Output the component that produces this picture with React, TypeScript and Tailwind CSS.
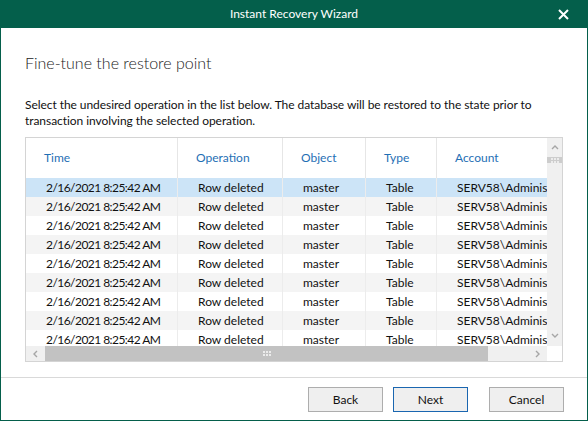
import React from "react";

const columns = [
  { label: "Time", w: "w-[152px]" },
  { label: "Operation", w: "w-[105px]" },
  { label: "Object", w: "w-[83px]" },
  { label: "Type", w: "w-[71px]" },
  { label: "Account", w: "w-[200px]" },
];

const row = ["2/16/2021 8:25:42 AM", "Row deleted", "master", "Table", "SERV58\\Administrator"];

const Chevron: React.FC<{ dir: "up" | "down" | "left" | "right" }> = ({ dir }) => {
  const pts = {
    up: "1,5 4,2 7,5",
    down: "1,2 4,5 7,2",
    left: "5,1 2,4 5,7",
    right: "2,1 5,4 2,7",
  }[dir];
  return (
    <svg width="8" height="8" viewBox="0 0 8 8" className="shrink-0">
      <polyline points={pts} fill="none" stroke="#a6a6a6" strokeWidth="1.4" />
    </svg>
  );
};

const Grip: React.FC = () => (
  <div className="grid grid-cols-3 gap-[1px]">
    {Array.from({ length: 6 }).map((_, i) => (
      <div key={i} className="w-[2px] h-[2px] bg-[#ececec]" />
    ))}
  </div>
);

export default function App() {
  return (
    <div
      className="w-[588px] h-[421px] flex flex-col bg-white border-x border-b border-[#045f4b] overflow-hidden"
      style={{ fontFamily: '"Segoe UI", "Lato", "Liberation Sans", sans-serif' }}
    >
      <div className="h-[28px] shrink-0 bg-[#045f4b] -mx-px flex items-center justify-center relative">
        <span className="text-white text-[12px]">Instant Recovery Wizard</span>
        <svg width="11" height="11" viewBox="0 0 11 11" className="absolute right-[19px] top-[9px]">
          <path d="M1 1 L10 10 M10 1 L1 10" stroke="white" strokeWidth="2" />
        </svg>
      </div>

      <div className="flex-1 flex flex-col px-[24px]">
        <h1 className="mt-[25px] text-[16px] font-light text-[#222] leading-[20px]" style={{ fontFamily: '"Lato", sans-serif' }}>
          Fine-tune the restore point
        </h1>
        <p className="mt-[24px] text-[12px] leading-[16px] tracking-[-0.06px] text-[#111]">
          Select the undesired operation in the list below. The database will be restored to the state prior to
          transaction involving the selected operation.
        </p>

        <div className="mt-[8px] h-[225px] w-[538px] border border-[#d4d4d4] flex flex-col">
          <div className="flex flex-1 min-h-0">
            <div className="flex-1 overflow-hidden">
              <div className="flex h-[40px] text-[#1f6fb5] text-[12px]">
                {columns.map((c) => (
                  <div
                    key={c.label}
                    className={`${c.w} shrink-0 flex items-center pl-[18px] border-r border-[#e6e6e6]`}
                  >
                    {c.label}
                  </div>
                ))}
              </div>
              {Array.from({ length: 9 }).map((_, r) => (
                <div
                  key={r}
                  className={`flex h-[19px] text-[12px] text-[#111] ${
                    r === 0 ? "bg-[#cce4f7]" : r % 2 === 1 ? "bg-[#f4f4f4]" : "bg-white"
                  }`}
                >
                  {columns.map((c, i) => (
                    <div
                      key={c.label}
                      className={`${c.w} shrink-0 flex items-center pl-[20px] whitespace-nowrap overflow-hidden border-r border-[#ececec] ${
                        i === 0 ? "tracking-[-0.55px]" : ""
                      }`}
                    >
                      {row[i]}
                    </div>
                  ))}
                </div>
              ))}
            </div>
            <div className="w-[15px] shrink-0 bg-[#f0f0f0] flex flex-col items-center">
              <div className="mt-[6px]">
                <Chevron dir="up" />
              </div>
              <div className="mt-[5px] w-[15px] h-[6px] bg-[#cdcdcd] flex items-center justify-center">
                <Grip />
              </div>
              <div className="mt-auto mb-[6px]">
                <Chevron dir="down" />
              </div>
            </div>
          </div>
          <div className="flex h-[15px] shrink-0">
            <div className="flex-1 bg-[#f0f0f0] flex items-center">
              <div className="w-[19px] flex justify-center">
                <Chevron dir="left" />
              </div>
              <div className="w-[443px] h-full bg-[#c2c2c2] flex items-center justify-center">
                <Grip />
              </div>
              <div className="flex-1" />
              <div className="w-[18px] flex justify-center">
                <Chevron dir="right" />
              </div>
            </div>
            <div className="w-[15px] shrink-0 bg-white" />
          </div>
        </div>
      </div>

      <div className="h-[43px] shrink-0 border-t border-[#d9d9d9] flex items-start justify-end pr-[23px] pt-[9px]">
        <button className="w-[75px] h-[25px] bg-[#efefef] border border-[#adadad] text-[12px] text-[#111]">Back</button>
        <button className="ml-[10px] w-[75px] h-[25px] bg-[#efefef] border border-[#1a66b0] text-[12px] text-[#111]">Next</button>
        <button className="ml-[21px] w-[75px] h-[25px] bg-[#efefef] border border-[#adadad] text-[12px] text-[#111]">Cancel</button>
      </div>
    </div>
  );
}
